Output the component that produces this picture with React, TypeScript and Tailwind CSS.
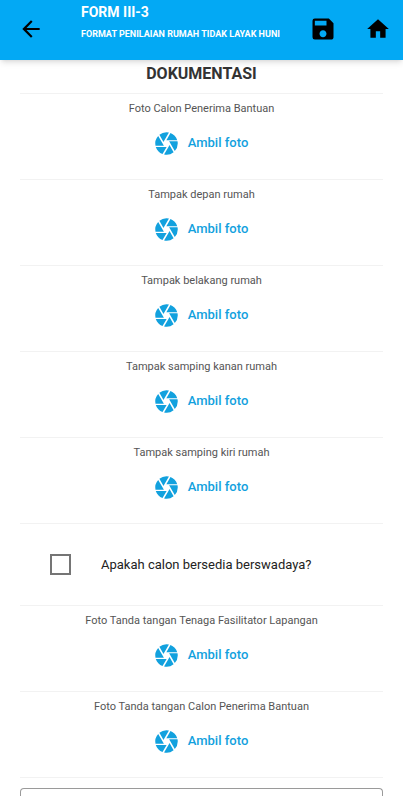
import { MdArrowBack, MdCamera, MdHome, MdSave } from "react-icons/md";

const HOUSE_PHOTOS = [
  "Foto Calon Penerima Bantuan",
  "Tampak depan rumah",
  "Tampak belakang rumah",
  "Tampak samping kanan rumah",
  "Tampak samping kiri rumah",
];

const SIGNATURE_PHOTOS = [
  "Foto Tanda tangan Tenaga Fasilitator Lapangan",
  "Foto Tanda tangan Calon Penerima Bantuan",
];

function Header() {
  return (
    <header className="relative flex h-[60px] items-center bg-[#03a9f4] pr-3 pb-[3px] pl-[18px] text-black shadow-md">
      <button type="button" aria-label="Kembali" className="shrink-0">
        <MdArrowBack className="size-[26px]" />
      </button>
      <div className="ml-[37px] min-w-0 flex-1 self-start pt-0.5 font-bold text-white">
        <h1 className="text-[14px] leading-5">FORM III-3</h1>
        <p className="mt-1 text-[9px] leading-4 whitespace-nowrap">FORMAT PENILAIAN RUMAH TIDAK LAYAK HUNI</p>
      </div>
      <button type="button" aria-label="Simpan" className="shrink-0">
        <MdSave className="size-7" />
      </button>
      <button type="button" aria-label="Beranda" className="ml-7 shrink-0">
        <MdHome className="size-[26px]" />
      </button>
    </header>
  );
}

function PhotoRow({ label }: { label: string }) {
  return (
    <section className="flex h-[86px] flex-col items-center border-b border-[#f2f2f2] pt-[7px]">
      <h3 className="text-[11px] leading-4 text-[#555555]">{label}</h3>
      <button type="button" className="mt-3 flex items-center gap-2 pr-0.5 text-[13px] leading-7 font-medium text-[#12a1de]">
        <MdCamera className="size-[27px]" />
        Ambil foto
      </button>
    </section>
  );
}

export default function App() {
  return (
    <div className="bg-white font-[Roboto,sans-serif]">
      <Header />
      <main className="px-5">
        <h2 className="border-b border-[#f2f2f2] pt-0.5 pb-[7px] text-center text-[16px] leading-6 font-bold text-[#333333]">
          DOKUMENTASI
        </h2>
        {HOUSE_PHOTOS.map((label) => (
          <PhotoRow key={label} label={label} />
        ))}
        <label className="flex h-[82px] items-center border-b border-[#f2f2f2] pl-[30px] text-[13px] text-[#222222]">
          <input type="checkbox" className="mr-[30px] size-[21px] appearance-none border-2 border-[#757575] checked:bg-[#03a9f4]" />
          Apakah calon bersedia berswadaya?
        </label>
        {SIGNATURE_PHOTOS.map((label) => (
          <PhotoRow key={label} label={label} />
        ))}
        <textarea
          aria-label="Catatan"
          className="mt-2.5 block h-2 w-full resize-none overflow-hidden rounded-t border border-b-0 border-[#9a9a9a]"
        />
      </main>
    </div>
  );
}
